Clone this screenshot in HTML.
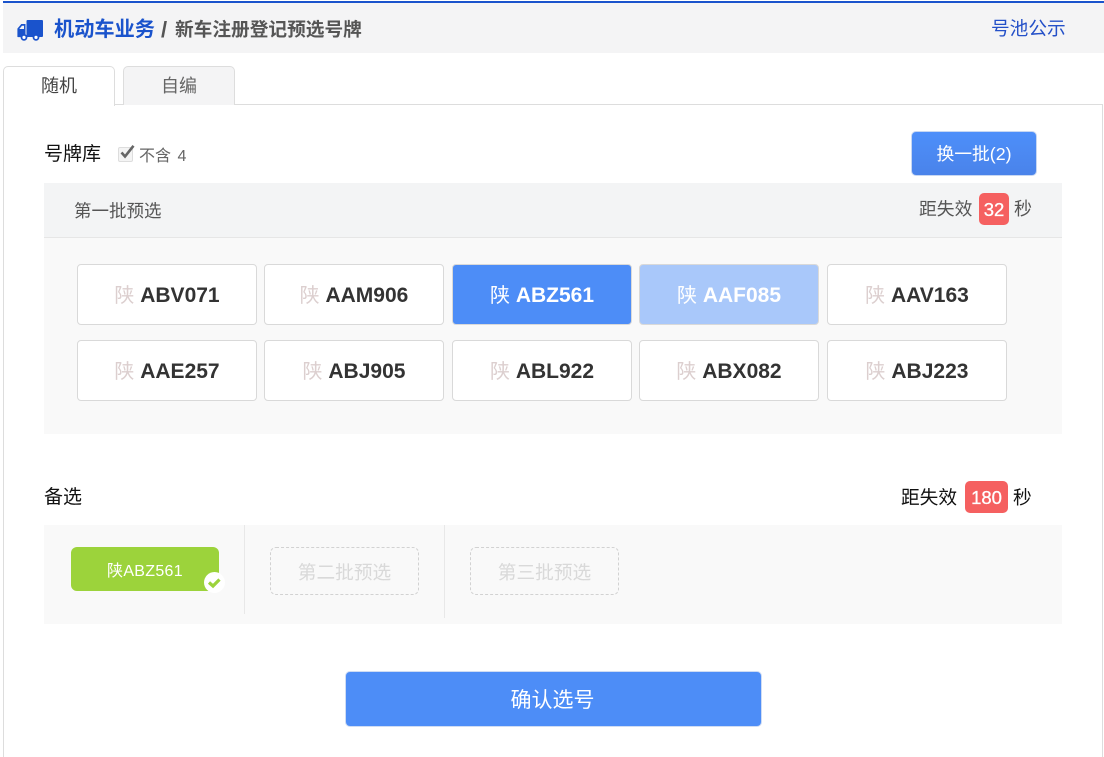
<!DOCTYPE html>
<html lang="zh">
<head>
<meta charset="utf-8">
<title>新车注册登记预选号牌</title>
<style>
html,body{margin:0;padding:0;background:#fff;width:1104px;height:757px;overflow:hidden;}
#wrap{position:relative;width:1104px;height:757px;overflow:hidden;font-family:"Liberation Sans","Noto Sans CJK SC",sans-serif;color:#333;}
.a{position:absolute;white-space:nowrap;}
.plate{position:absolute;box-sizing:border-box;width:180px;height:61px;background:#fff;border:1px solid #d9d9d9;border-radius:4px;text-align:center;line-height:62px;font-size:21px;font-weight:bold;color:#333;white-space:nowrap;}
.plate i{font-style:normal;font-weight:normal;font-size:20px;color:#dccfcf;}
.plate.on{background:#4d8df7;border-color:#d9d9d9;color:#fff;}
.plate.on i{color:#fff;}
.plate.dim{background:#a9c8fa;border-color:#d9d9d9;color:#fff;}
.plate.dim i{color:#fff;}
.dash{position:absolute;box-sizing:border-box;top:547px;width:149px;height:48px;border:1px dashed #d2d2d2;border-radius:6px;text-align:center;line-height:50px;font-size:18.700px;color:#d9d9d9;background:#f9f9f9;}
.badge{position:absolute;background:#f56060;color:#fff;border-radius:5px;text-align:center;font-size:18.500px;-webkit-text-stroke:.3px #fff;}
</style>
</head>
<body>
<div id="wrap">
<div class="a" style="left:3px;top:1px;width:1101px;height:2px;background:#1a53cc;"></div>
<div class="a" style="left:3px;top:3px;width:1101px;height:50px;background:#f4f4f5;"></div>
<svg class="a" style="left:17px;top:20px;" width="26" height="21" viewBox="0 0 26 21">
<path fill="#1a53cc" d="M9.500 1a1 1 0 0 1 1-1H25a1 1 0 0 1 1 1V16a1 1 0 0 1-1 1H9.500zM8.500 4H4.300L.4 8.600V16.500a.6.6 0 0 0 .6.6H8.500zM7 5.800V9H2.300L5 5.800z"/>
<circle cx="7" cy="17.400" r="2.500" fill="#fff" stroke="#1a53cc" stroke-width="1.800"/>
<circle cx="19" cy="17.400" r="2.500" fill="#fff" stroke="#1a53cc" stroke-width="1.800"/>
</svg>
<div class="a" style="left:54px;top:16px;font-size:20.200px;line-height:28px;font-weight:bold;color:#1a53cc;">机动车业务</div>
<div class="a" style="left:161px;top:16px;font-size:22px;line-height:28px;font-weight:bold;color:#555;">/</div>
<div class="a" style="left:175px;top:16px;font-size:18.700px;line-height:28px;font-weight:bold;color:#555;">新车注册登记预选号牌</div>
<div class="a" style="left:991px;top:15px;font-size:18.700px;line-height:27px;color:#2450c8;">号池公示</div>

<div class="a" style="left:3px;top:104px;width:1100px;height:670px;border:1px solid #ddd;box-sizing:border-box;"></div>
<div class="a" style="left:123px;top:66px;width:112px;height:39px;box-sizing:border-box;background:#f4f4f5;border:1px solid #ddd;border-bottom:none;border-radius:5px 5px 0 0;text-align:center;line-height:38px;font-size:18px;color:#666;">自编</div>
<div class="a" style="left:3px;top:66px;width:112px;height:40px;box-sizing:border-box;background:#fff;border:1px solid #ddd;border-bottom:none;border-radius:5px 5px 0 0;text-align:center;line-height:38px;font-size:18px;color:#444;">随机</div>

<div class="a" style="left:44px;top:142px;font-size:19px;line-height:26px;color:#111;">号牌库</div>
<div class="a" style="left:118px;top:147px;width:15px;height:15px;box-sizing:border-box;border:1px solid #ddd;background:#f4f4f4;border-radius:2px;"></div>
<svg class="a" style="left:119px;top:144px;" width="17" height="16" viewBox="0 0 17 16"><path d="M2.500 8.500L6 12.500 14.500 1.800" fill="none" stroke="#666" stroke-width="2.600"/></svg>
<div class="a" style="left:139px;top:145px;font-size:16px;line-height:23px;color:#666;word-spacing:2px;">不含 4</div>

<div class="a" style="left:911px;top:131px;width:126px;height:45px;box-sizing:border-box;background:linear-gradient(#4d8ffa,#4a83ea);border:1px solid #c7d7f2;border-radius:5px;text-align:center;line-height:44px;font-size:17.800px;color:#fff;">换一批(2)</div>

<div class="a" style="left:44px;top:183px;width:1018px;height:251px;background:#f9f9f9;"></div>
<div class="a" style="left:44px;top:183px;width:1018px;height:54px;background:#f3f4f5;border-bottom:1px solid #e6e6e6;"></div>
<div class="a" style="left:74px;top:198px;font-size:17.500px;line-height:27px;color:#555;">第一批预选</div>
<div class="a" style="left:919px;top:196px;font-size:17.800px;line-height:27px;color:#555;">距失效</div>
<div class="badge" style="left:979px;top:193px;width:30px;height:32px;line-height:33px;">32</div>
<div class="a" style="left:1014px;top:196px;font-size:18px;line-height:27px;color:#555;">秒</div>

<div class="plate" style="left:77px;top:264px;"><i>陕</i> ABV071</div>
<div class="plate" style="left:264px;top:264px;"><i>陕</i> AAM906</div>
<div class="plate on" style="left:452px;top:264px;"><i>陕</i> ABZ561</div>
<div class="plate dim" style="left:639px;top:264px;"><i>陕</i> AAF085</div>
<div class="plate" style="left:827px;top:264px;"><i>陕</i> AAV163</div>
<div class="plate" style="left:77px;top:340px;"><i>陕</i> AAE257</div>
<div class="plate" style="left:264px;top:340px;"><i>陕</i> ABJ905</div>
<div class="plate" style="left:452px;top:340px;"><i>陕</i> ABL922</div>
<div class="plate" style="left:639px;top:340px;"><i>陕</i> ABX082</div>
<div class="plate" style="left:827px;top:340px;"><i>陕</i> ABJ223</div>

<div class="a" style="left:44px;top:484px;font-size:19px;line-height:27px;color:#111;">备选</div>
<div class="a" style="left:901px;top:484px;font-size:18.700px;line-height:27px;color:#111;">距失效</div>
<div class="badge" style="left:965px;top:481px;width:43px;height:32px;line-height:33px;">180</div>
<div class="a" style="left:1013px;top:484px;font-size:18.700px;line-height:27px;color:#111;">秒</div>

<div class="a" style="left:44px;top:525px;width:1018px;height:99px;background:#f9f9f9;"></div>
<div class="a" style="left:244px;top:525px;width:1px;height:89px;background:#e8e8e8;"></div>
<div class="a" style="left:444px;top:525px;width:1px;height:93px;background:#e8e8e8;"></div>
<div class="a" style="left:71px;top:547px;width:148px;height:44px;background:#9cd33b;border-radius:6px;text-align:center;line-height:50px;font-size:16px;color:#fff;letter-spacing:.3px;">陕ABZ561</div>
<svg class="a" style="left:204px;top:572px;" width="21" height="21" viewBox="0 0 21 21"><circle cx="10.500" cy="10.500" r="10.500" fill="#fff"/><path d="M5 10.500L9 14 15.500 7.500" fill="none" stroke="#9cd33b" stroke-width="3.200"/></svg>
<div class="dash" style="left:270px;">第二批预选</div>
<div class="dash" style="left:470px;">第三批预选</div>

<div class="a" style="left:345px;top:671px;width:417px;height:56px;box-sizing:border-box;background:#4d8df7;border:1px solid #cfdcf3;border-radius:5px;text-align:center;line-height:58px;font-size:21px;color:#fff;text-indent:-2px;">确认选号</div>
</div>
</body>
</html>
